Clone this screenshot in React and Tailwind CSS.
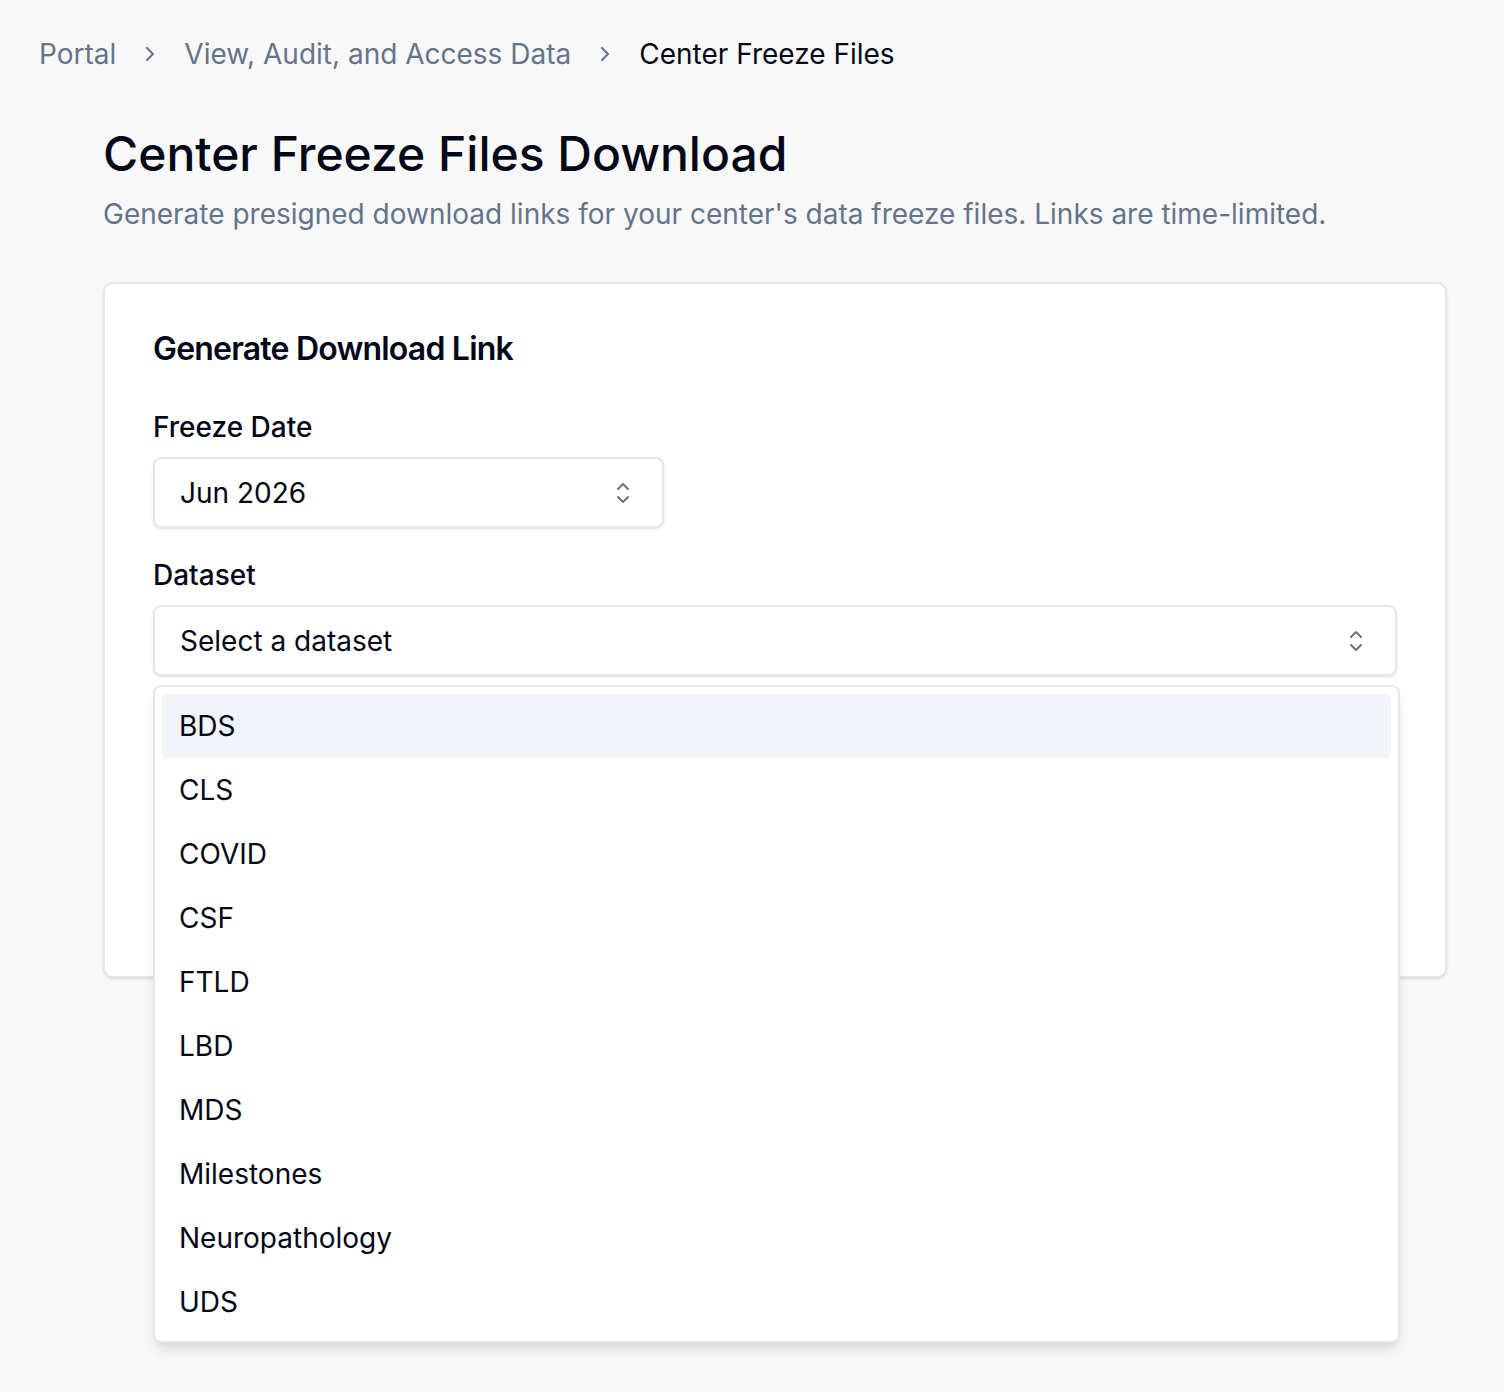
import { ChevronRight } from 'lucide-react'

const DATASETS = ['BDS', 'CLS', 'COVID', 'CSF', 'FTLD', 'LBD', 'MDS', 'Milestones', 'Neuropathology', 'UDS']

function UpDown() {
  return (
    <svg width="16" height="26" viewBox="0 0 16 26" fill="none" stroke="#6b7280" strokeWidth="2" strokeLinecap="round" strokeLinejoin="round">
      <path d="M3 9l5-5 5 5" />
      <path d="M3 17l5 5 5-5" />
    </svg>
  )
}

export default function App() {
  return (
    <div className="min-h-[1392px] bg-[#f8f8f8] text-[#020817]" style={{ fontFamily: 'Inter, "Noto Sans", sans-serif' }}>
      {/* Breadcrumb */}
      <nav className="flex items-center pl-[39px] pt-[35px] text-[28px] leading-[38px]">
        <span className="text-[#64748b]">Portal</span>
        <ChevronRight className="mx-[22px] w-[24px] h-[24px] text-[#64748b]" strokeWidth={2} />
        <span className="text-[#64748b]">View, Audit, and Access Data</span>
        <ChevronRight className="mx-[22px] w-[24px] h-[24px] text-[#64748b]" strokeWidth={2} />
        <span className="text-[#020817]">Center Freeze Files</span>
      </nav>

      <main className="pl-[103px] pt-[51px]">
        <h1 className="text-[48px] leading-[60px] font-medium">Center Freeze Files Download</h1>
        <p className="mt-[10px] text-[28px] leading-[40px] text-[#64748b]">
          Generate presigned download links for your center's data freeze files. Links are time-limited.
        </p>

        <div className="relative mt-[48px] w-[1344px] h-[696px] bg-white border-2 border-[#e5e7eb] rounded-[10px] shadow-sm px-[48px] pt-[45px]">
          <h2 className="text-[32px] leading-[40px] font-semibold tracking-tight">Generate Download Link</h2>

          <label className="block mt-[38px] text-[28px] leading-[40px] font-medium">Freeze Date</label>
          <div className="mt-[10px] w-[511px] h-[71px] flex items-center justify-between pl-[25px] pr-[31px] border-2 border-[#e5e7eb] rounded-[8px] shadow-sm text-[28px]">
            <span>Jun 2026</span>
            <UpDown />
          </div>

          <label className="block mt-[27px] text-[28px] leading-[40px] font-medium">Dataset</label>
          <div className="mt-[10px] h-[71px] flex items-center justify-between pl-[25px] pr-[31px] border-2 border-[#e5e7eb] rounded-[8px] shadow-sm text-[28px]">
            <span>Select a dataset</span>
            <UpDown />
          </div>

          {/* Open dropdown list */}
          <ul className="absolute left-[48px] top-[401px] w-[1247px] bg-white border-2 border-[#e5e7eb] rounded-[8px] shadow-lg p-[7px] z-10">
            {DATASETS.map((d, i) => (
              <li
                key={d}
                className={`h-[64px] flex items-center pl-[17px] text-[28px] rounded-[4px] ${i === 0 ? 'bg-[#f1f5f9]' : ''}`}
              >
                {d}
              </li>
            ))}
          </ul>
        </div>
      </main>
    </div>
  )
}
